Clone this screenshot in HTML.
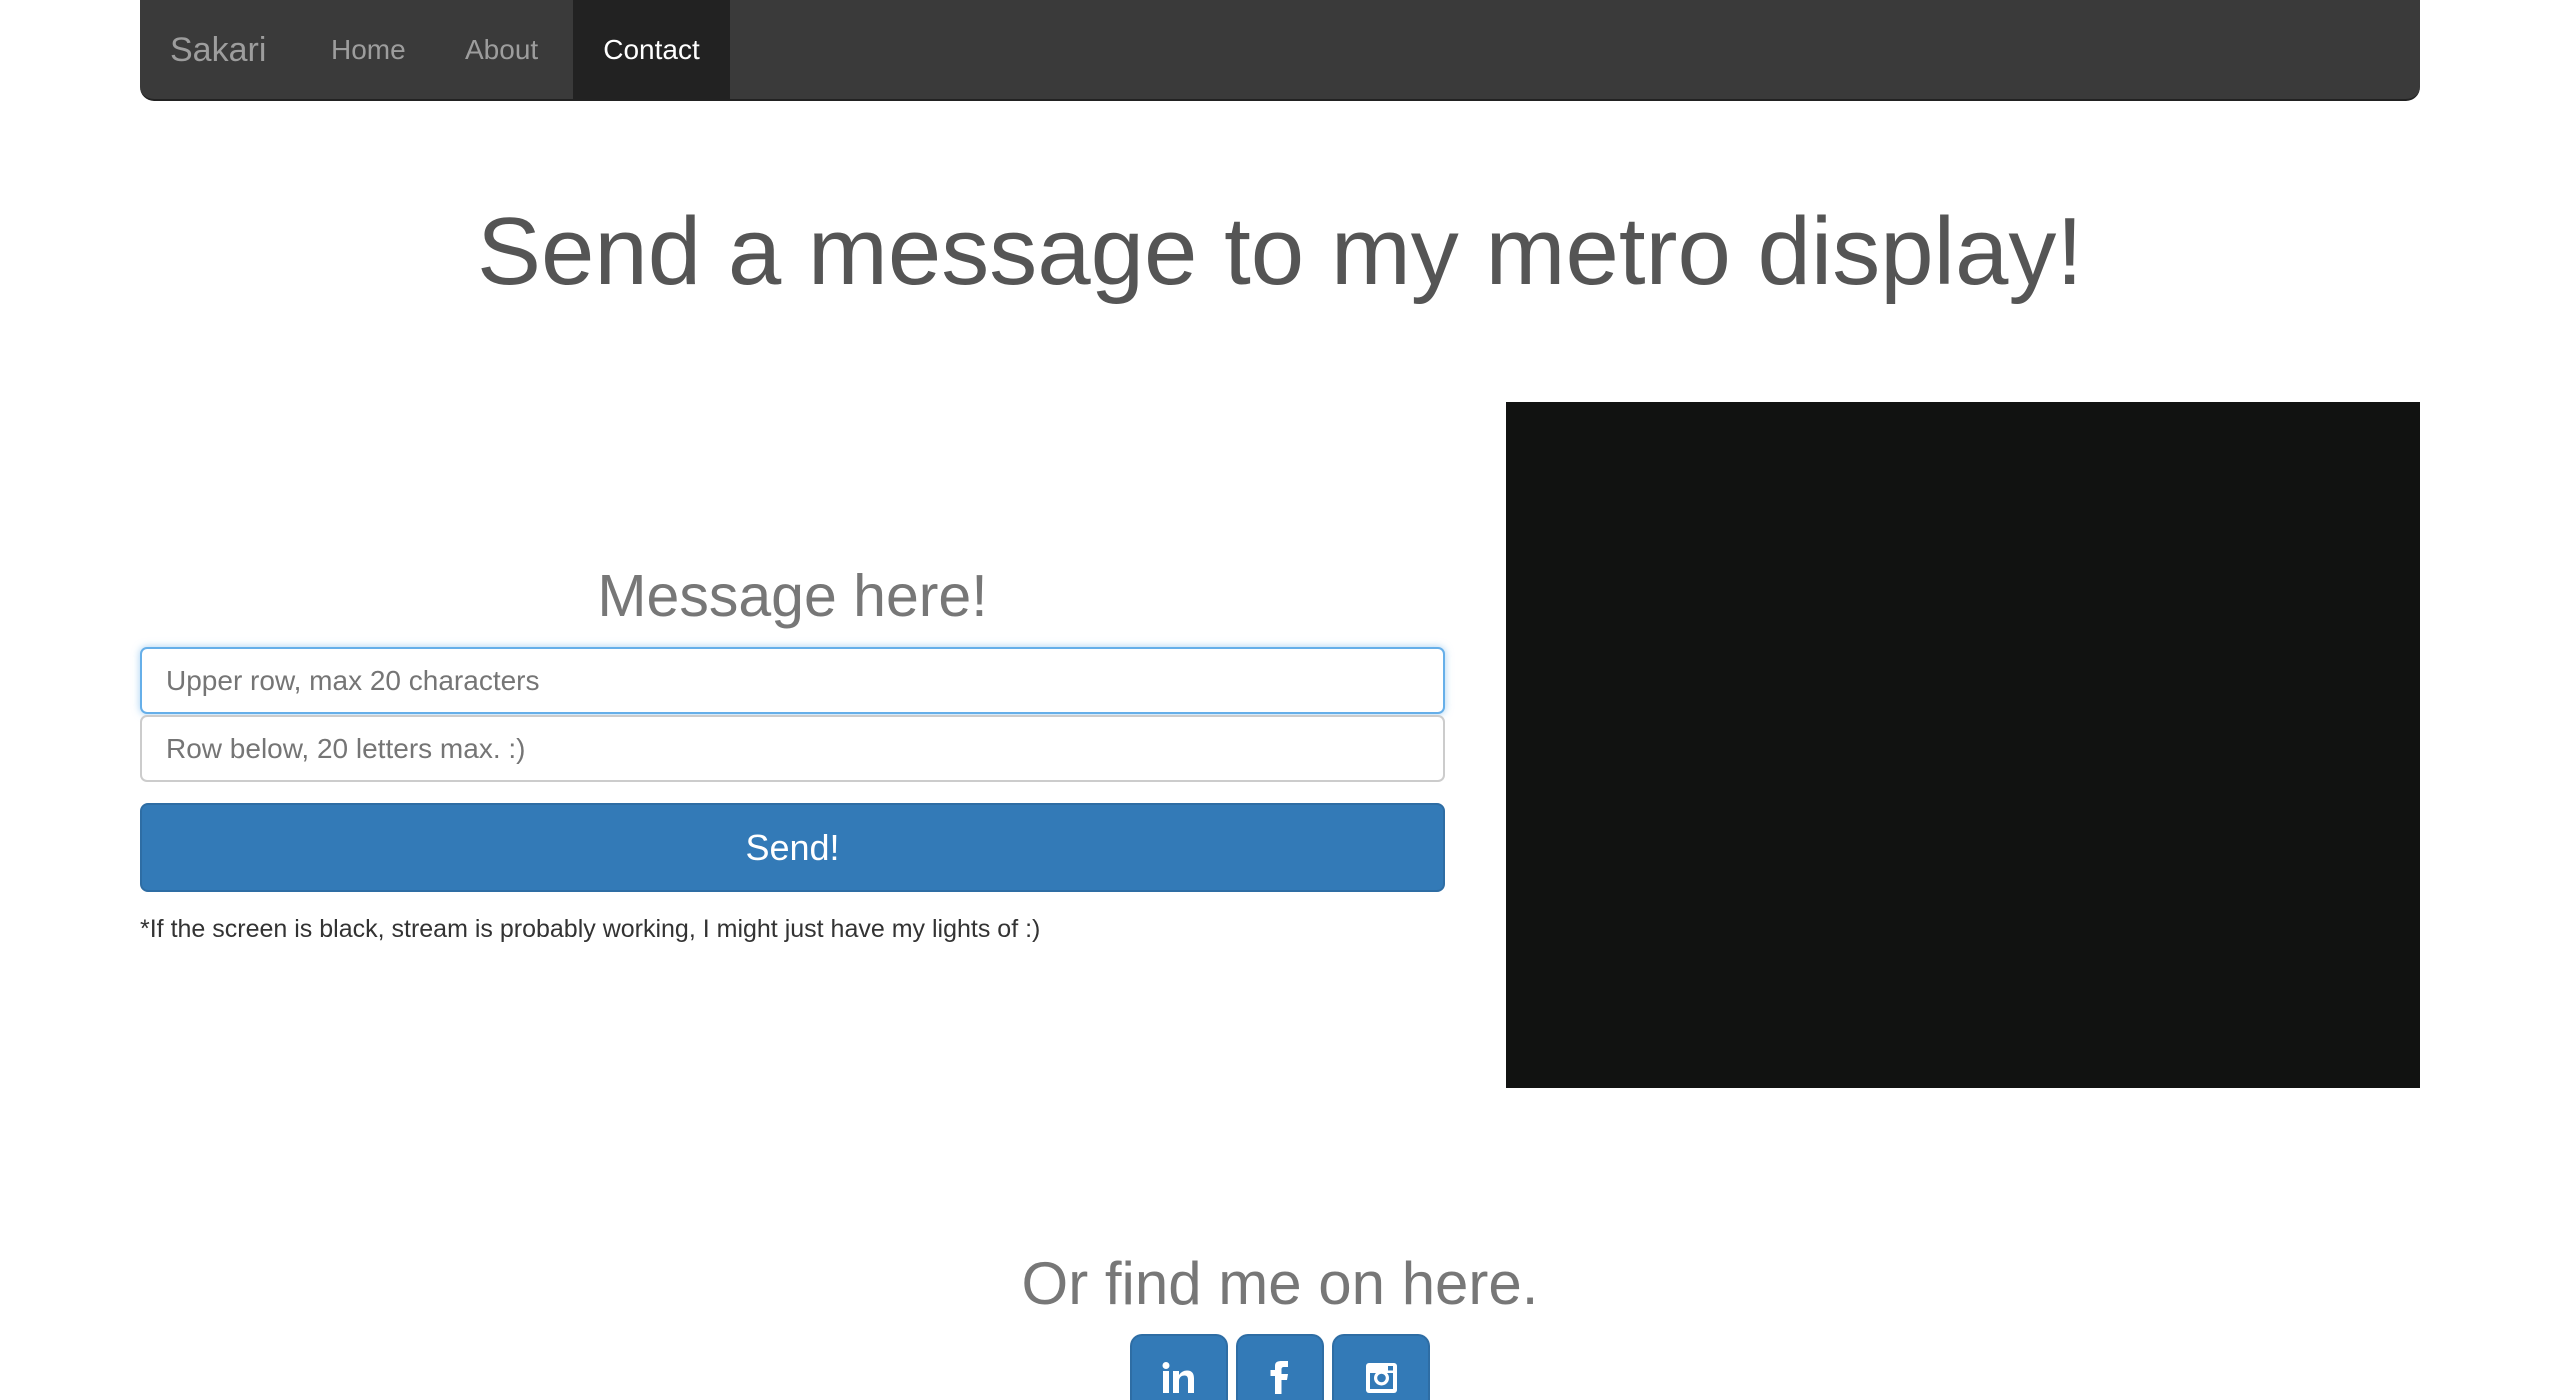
<!DOCTYPE html>
<html><head><meta charset="utf-8"><style>
*{box-sizing:border-box;margin:0;padding:0}
html,body{width:2560px;height:1400px;overflow:hidden}
body{background:#fff;font-family:"Liberation Sans",Arial,sans-serif;position:relative}
.nav{position:absolute;left:140px;top:0;width:2280px;height:101px;background:#3a3a3a;border-radius:0 0 14px 14px;border-bottom:2px solid #222}
.nav span{position:absolute;top:0;line-height:100px;color:#9d9d9d;font-size:28px}
.abs{position:absolute}
input{position:absolute;left:140px;width:1305px;height:67px;border:2px solid #ccc;border-radius:7px;font-family:inherit;font-size:28px;padding-left:24px;color:#999;background:#fff}
.sb{position:absolute;top:1334px;height:66px;background:#337ab7;border:2px solid #2e6da4;border-bottom:none;border-radius:12px 12px 0 0;overflow:hidden}
.sb svg{position:absolute;left:-2px;top:-2px}
</style></head><body>
<div class="nav">
<span style="left:30px;font-size:34px">Sakari</span>
<span style="left:191px">Home</span>
<span style="left:325px">About</span>
<span style="left:433px;width:157px;height:100px;background:#222;color:#fff;text-align:center">Contact</span>
</div>
<div class="abs" style="left:0;width:2560px;top:192px;text-align:center;font-size:96px;color:#555;line-height:120px">Send a message to my metro display!</div>
<div class="abs" style="left:140px;width:1305px;top:561px;text-align:center;font-size:59px;color:#777;line-height:70px">Message here!</div>
<input style="top:647px;border-color:#66afe9;box-shadow:0 0 8px rgba(102,175,233,.6)" placeholder="Upper row, max 20 characters">
<input style="top:715px" placeholder="Row below, 20 letters max. :)">
<div class="abs" style="left:140px;top:803px;width:1305px;height:89px;background:#337ab7;border:2px solid #2e6da4;border-radius:8px;color:#fff;font-size:36px;text-align:center;line-height:85px">Send!</div>
<div class="abs" style="left:140px;top:912px;font-size:25px;color:#333;line-height:34px">*If the screen is black, stream is probably working, I might just have my lights of :)</div>
<div class="abs" style="left:1506px;top:402px;width:914px;height:686px;background:#111211"></div>
<div class="abs" style="left:0;width:2560px;top:1249px;text-align:center;font-size:60px;color:#777;line-height:70px">Or find me on here.</div>
<div class="sb" style="left:1130px;width:98px"><svg width="98" height="100" viewBox="1130 1334 98 100"><rect x="1163" y="1371" width="6" height="22" fill="#fff"/><circle cx="1166" cy="1365.5" r="3.5" fill="#fff"/><path d="M1173 1371h6v4c2-3 5-4.5 8-4.5 5 0 7 3 7 8V1393h-6v-13c0-3-1-4.5-3.5-4.5s-5.5 1.5-5.5 5.5v12h-6z" fill="#fff"/></svg></div>
<div class="sb" style="left:1236px;width:88px"><svg width="88" height="100" viewBox="1236 1334 88 100"><path d="M1275 1394v-18h-4.5v-6h4.5v-4c0-4 2.5-5 7-5h6v6h-4c-1.5 0-2.5.5-2.5 2.5v4.5h6.5l-1 6h-5.5v14z" fill="#fff"/></svg></div>
<div class="sb" style="left:1332px;width:98px"><svg width="98" height="100" viewBox="1332 1334 98 100"><rect x="1366" y="1363" width="31" height="30" rx="3" fill="#fff"/><rect x="1370" y="1373" width="23" height="16" fill="#337ab7"/><circle cx="1381.5" cy="1378" r="7.5" fill="#fff"/><circle cx="1381.5" cy="1378" r="4.3" fill="#337ab7"/><rect x="1388" y="1366" width="5" height="4.5" fill="#337ab7"/></svg></div>
</body></html>
